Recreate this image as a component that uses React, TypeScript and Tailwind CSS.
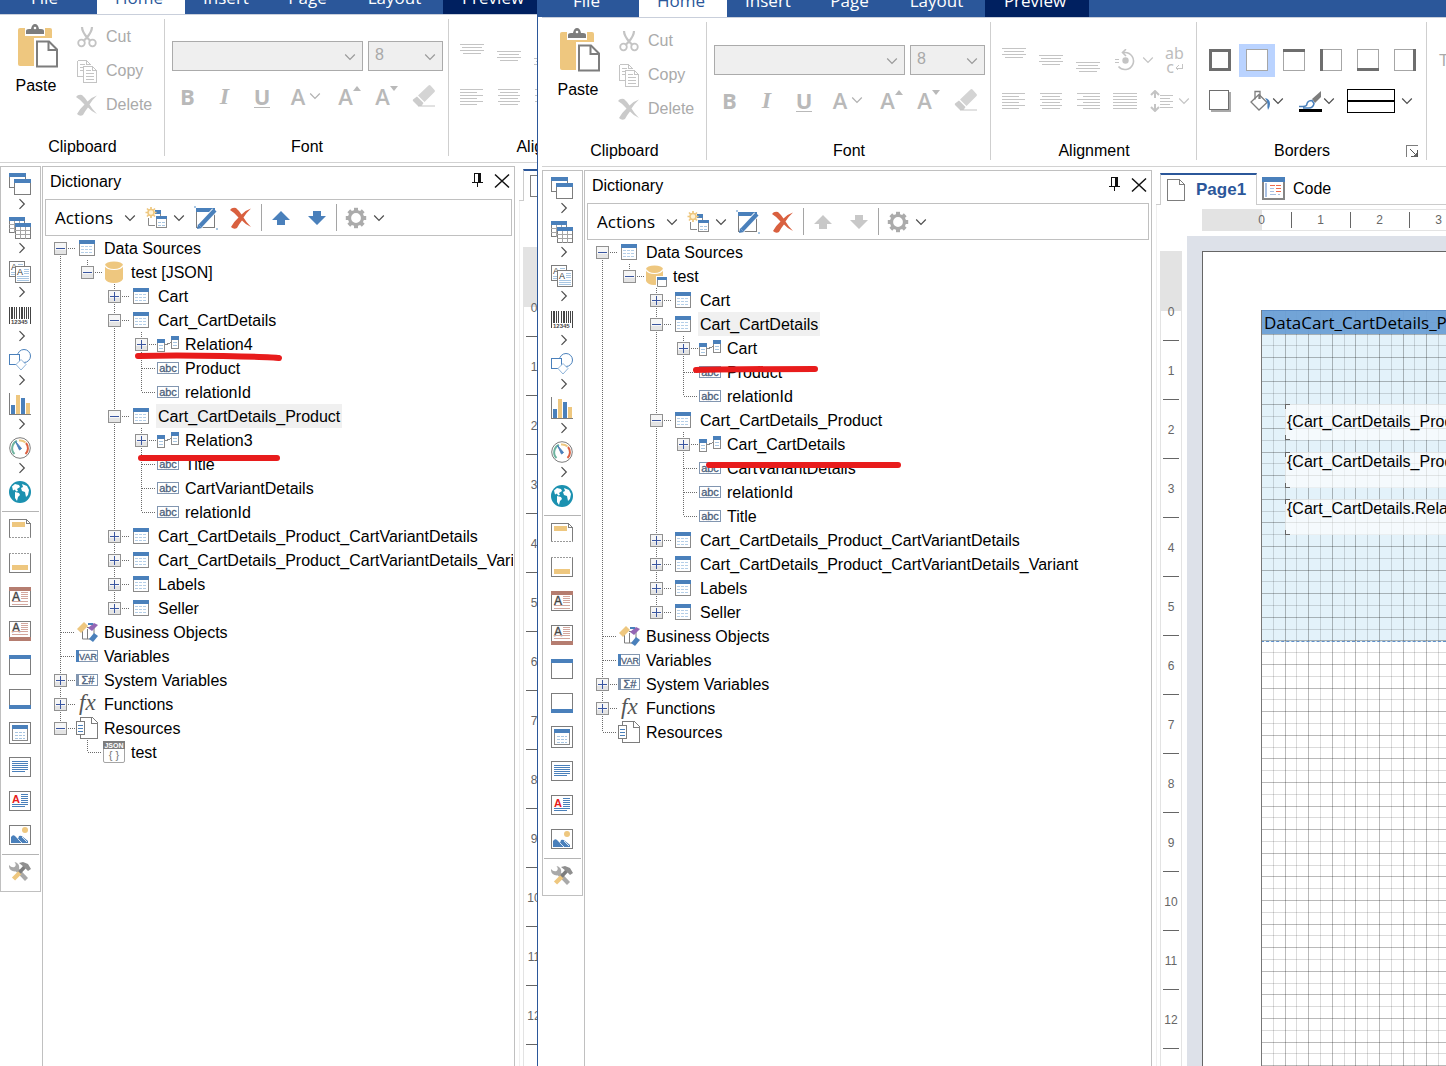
import React, { type ReactNode } from 'react';

const BLUE = '#4a80bb';
const GRAY = '#7d7d7d';
const GOLD = '#eec77f';
const MUTE = '#c4c4c4';

type SvgProps = { w?: number; h?: number; children: ReactNode; crisp?: boolean };

function Svg({ w = 22, h = 22, children, crisp = true }: SvgProps) {
  return (
    <svg
      width={w}
      height={h}
      viewBox={`0 0 ${w} ${h}`}
      fill="none"
      shapeRendering={crisp ? 'crispEdges' : 'auto'}
      aria-hidden="true"
      className="block shrink-0"
    >
      {children}
    </svg>
  );
}

function Lines({ rows, color }: { rows: [number, number, number][]; color: string }) {
  return (
    <>
      {rows.map(([x, y, w], i) => (
        <rect key={i} x={x} y={y} width={w} height={1} fill={color} />
      ))}
    </>
  );
}

function Chevron({ color = '#4d4d4d', side = false }: { color?: string; side?: boolean }) {
  return side ? (
    <Svg w={8} h={12} crisp={false}>
      <path d="M1.500 1.200 6.300 6l-4.800 4.800" stroke={color} strokeWidth={1.200} />
    </Svg>
  ) : (
    <Svg w={12} h={8} crisp={false}>
      <path d="M1.200 1.500 6 6.300l4.800-4.800" stroke={color} strokeWidth={1.200} />
    </Svg>
  );
}

/* ---------- ribbon icons ---------- */

const PasteIcon = () => (
  <Svg w={44} h={44} crisp={false}>
    <rect x={4} y={4} width={34} height={38} rx={2} fill={GOLD} />
    <path d="M11 0h20v12H11z" fill="#fff" />
    <path d="M12 10V7q0-2 3-2h2q1-5 4-5t4 5h2q3 0 3 2v3z" fill={GRAY} />
    <circle cx={21} cy={4} r={1.300} fill="#fff" />
    <path d="M20 14h18l6 6v24H20z" fill="#fff" />
    <path d="M23 17.500h12l8 8v17H23z" stroke={GRAY} strokeWidth={2} fill="#fff" />
    <path d="M34.500 17.500v8.500H43" stroke={GRAY} strokeWidth={2} />
  </Svg>
);

const CutIcon = () => (
  <Svg crisp={false}>
    <path d="M6 1c0 4 2 7 5.500 11l3 3M16 1c0 4-2 7-5.500 11l-3 3" stroke={MUTE} strokeWidth={2.200} />
    <circle cx={5.500} cy={17} r={3.300} stroke={MUTE} strokeWidth={1.800} />
    <circle cx={16.500} cy={17} r={3.300} stroke={MUTE} strokeWidth={1.800} />
  </Svg>
);

const CopyIcon = () => (
  <Svg h={24}>
    <path d="M1.500 1.500h9l4 4M1.500 1.500v16h5" stroke={MUTE} />
    <path d="M7.500 7.500h9l4 4v12h-13z" stroke={MUTE} fill="#fff" />
    <path d="M16.500 7.500v4h4M10.500 1.500v4h4" stroke={MUTE} />
    <Lines color={MUTE} rows={[[4, 5, 5], [4, 8, 3], [4, 11, 3], [10, 11, 5], [10, 14, 8], [10, 17, 8], [10, 20, 8]]} />
  </Svg>
);

const CrossIcon = ({ color }: { color: string }) => (
  <Svg crisp={false}>
    <path
      d="M0 3Q2 0 6 1q3 2.500 5.500 6.500Q16 3 21 1.500 16 6 13.500 10.500 16 15 21 20q-5-2-9-6.500-3 3.500-5 7.500-3 2-6-1 3-5.500 7.500-9.500Q5 6 0 3z"
      fill={color}
    />
  </Svg>
);

const FontSizeIcon = ({ up }: { up: boolean }) => (
  <span className="flex items-start">
    <span className="text-[22px] leading-[30px] font-semibold">A</span>
    <span className="pt-1">
      <Svg w={8} h={8} crisp={false}>
        <path d={up ? 'M0 6 4 1l4 5z' : 'M0 1h8L4 6z'} fill="#b9b9b9" />
      </Svg>
    </span>
  </span>
);

const EraserIcon = () => (
  <Svg w={24} h={24} crisp={false}>
    <path d="m6 11.500 10.500-10q1-1 2 0l4 4.500q1 1 0 2L12.500 18z" fill="#d4d4d4" />
    <path d="m5 12.500 6.500 6.500-2 3H6L1 17q-.5-1 0-1.500z" fill="#cccccc" />
    <path d="M6 22h17" stroke={MUTE} />
  </Svg>
);

const TextLines = ({ y, widths, align }: { y: number; widths: number[]; align: 'l' | 'c' | 'r' }) => (
  <Svg w={24} h={24}>
    <Lines
      color={MUTE}
      rows={widths.map((w, i) => [align === 'l' ? 0 : align === 'r' ? 24 - w : Math.floor((24 - w) / 2), y + i * 3, w])}
    />
  </Svg>
);

const RotateIcon = () => (
  <Svg w={22} h={22} crisp={false}>
    <path d="M9 3.500h2a8.500 8.500 0 1 1-6.500 14M12 .2 8.500 3.500l3.500 3.500" stroke={MUTE} strokeWidth={1.600} />
    <circle cx={11.500} cy={11.500} r={3.200} fill={MUTE} />
    <path d="M1 10.500h4M1 13.500h4" stroke={MUTE} />
  </Svg>
);

const SpacingIcon = () => (
  <Svg w={24} h={22} crisp={false}>
    <path d="M5 1v7M5 14v7M1 5l4-4 4 4M1 17l4 4 4-4" stroke={MUTE} strokeWidth={2} />
    <Lines color={MUTE} rows={[[10, 5, 13], [10, 8, 10], [10, 11, 13], [10, 14, 10], [10, 17, 13]]} />
  </Svg>
);

const BoxIcon = ({ side }: { side: 'all' | 'none' | 'top' | 'left' | 'bottom' | 'right' }) => (
  <Svg>
    {side === 'all' ? (
      <rect x={1.500} y={1.500} width={19} height={19} stroke="#6e6e6e" strokeWidth={3} fill="#fff" />
    ) : (
      <rect x={0.500} y={0.500} width={21} height={21} stroke="#a6a6a6" fill="#fff" />
    )}
    {side === 'top' && <rect width={22} height={3} fill="#6e6e6e" />}
    {side === 'left' && <rect width={3} height={22} fill="#6e6e6e" />}
    {side === 'bottom' && <rect y={19} width={22} height={3} fill="#6e6e6e" />}
    {side === 'right' && <rect x={19} width={3} height={22} fill="#6e6e6e" />}
  </Svg>
);

const ShadowIcon = () => (
  <Svg>
    <rect x={2} y={2} width={20} height={20} fill="#a9a9a9" />
    <rect x={0.500} y={0.500} width={19} height={19} stroke="#6e6e6e" fill="#fff" />
  </Svg>
);

const BucketIcon = () => (
  <Svg crisp={false}>
    <path d="m9 4.500 8 8-8 7.500-8-8z" stroke={GRAY} strokeWidth={1.300} fill="#fff" />
    <path d="M5 9.500V1.500h5V9M9 5v4" stroke={GRAY} strokeWidth={1.300} />
    <path d="M15 8q5 1 5 6 0 3-2 6-1-3-.5-6 0-3-2.500-6z" fill={BLUE} />
  </Svg>
);

const PenIcon = () => (
  <Svg w={25} h={24} crisp={false}>
    <path d="M23 2v6l-6 6-3-4z" fill={GRAY} />
    <path d="M1 17.500h4q4 0 4-3 1-3 5-3l2 3q-1 5-6 4.500H5" stroke={BLUE} strokeWidth={1.500} />
    <rect x={1} y={20} width={23} height={3} fill="#000" />
  </Svg>
);

const LineStyleIcon = () => (
  <Svg w={48} h={24}>
    <rect x={0.500} y={0.500} width={47} height={23} stroke="#000" fill="#fff" />
    <rect y={11} width={48} height={2} fill="#000" />
  </Svg>
);

/* ---------- component rail icons ---------- */

const BandsIcon = () => (
  <Svg>
    <rect x={0.500} y={0.500} width={16} height={14} stroke={GRAY} fill="#fff" />
    <rect width={17} height={4} fill={BLUE} />
    <rect x={5} y={6} width={17} height={16} fill="#fff" />
    <rect x={5.500} y={6.500} width={16} height={15} stroke={GRAY} fill="#fff" />
    <rect x={5} y={6} width={17} height={4} fill={BLUE} />
  </Svg>
);

const TablesIcon = () => (
  <Svg>
    <rect x={0.500} y={0.500} width={15} height={15} stroke={GRAY} fill="#fff" />
    <path d="M0 7.500h15M0 11.500h15M5.500 4v12M10.500 4v12" stroke="#a5a5a5" />
    <rect width={16} height={4} fill={BLUE} />
    <rect x={6.500} y={6.500} width={15} height={15} stroke={GRAY} fill="#fff" />
    <path d="M6 13.500h15M6 17.500h15M11.500 10v12M16.500 10v12" stroke="#a5a5a5" />
    <rect x={6} y={6} width={16} height={4} fill={BLUE} />
  </Svg>
);

const TextsIcon = () => (
  <Svg>
    <rect x={0.500} y={0.500} width={15} height={15} stroke={GRAY} fill="#fff" />
    <text x={2} y={9} fontSize={9} fontFamily="Liberation Sans" fill="#444">A</text>
    <Lines color="#a8c6e2" rows={[[9, 3, 5], [2, 11, 4], [2, 13, 4]]} />
    <rect x={6.500} y={5.500} width={15} height={16} stroke={GRAY} fill="#fff" />
    <text x={8} y={14} fontSize={9} fontFamily="Liberation Sans" fill="#333">A</text>
    <Lines color="#a8c6e2" rows={[[15, 8, 5], [15, 10, 5], [15, 12, 5], [8, 15, 12], [8, 17, 12], [8, 19, 12]]} />
  </Svg>
);

const BarcodeIcon = () => (
  <Svg>
    {[0, 2, 5, 7, 10, 12, 15, 17, 19, 21].map((x, i) => (
      <rect key={x} x={x} y={2} width={i === 1 || i === 5 ? 2 : 1} height={i === 0 || i === 9 ? 17 : 12} fill="#444" />
    ))}
    <text x={2} y={19} fontSize={6} fontFamily="Liberation Sans" fontWeight="bold" fill="#444">12345</text>
  </Svg>
);

const ShapesIcon = () => (
  <Svg crisp={false}>
    <circle cx={15} cy={7} r={6.500} stroke={BLUE} />
    <rect x={0.500} y={5.500} width={10} height={10} stroke={BLUE} fill="#fff" />
    <path d="m12 10.500 5 5-5 5.500-5-5.500z" stroke="#8fb4d9" fill="#fff" />
  </Svg>
);

const ChartIcon = () => (
  <Svg>
    <path d="M.5 0v21.500H22" stroke={GRAY} />
    <rect x={2} y={12} width={4} height={9} fill={BLUE} />
    <rect x={7} y={2} width={4} height={19} fill={GOLD} />
    <rect x={12} y={5} width={4} height={16} fill={BLUE} />
    <rect x={17} y={10} width={4} height={11} fill={GOLD} />
  </Svg>
);

const GaugeIcon = () => (
  <Svg crisp={false}>
    <circle cx={11} cy={11} r={10.300} stroke={GRAY} fill="#fff" />
    <path d="M5.500 17A8 8 0 0 1 8 4" stroke="#6fb4a0" strokeWidth={2} />
    <path d="M10 3.500a8 8 0 0 1 6.500 2" stroke={GOLD} strokeWidth={2} />
    <path d="M17 6a8 8 0 0 1-.5 11" stroke="#dc6243" strokeWidth={2} />
    <path d="m6.500 4.500 6 7-2 1.500z" fill={BLUE} stroke={BLUE} />
  </Svg>
);

const GlobeIcon = () => (
  <Svg crisp={false}>
    <circle cx={11} cy={11} r={11} fill="#1b91b0" />
    <path d="M3 5.500 6 3l4 1 1 2-3 2 1 2-2 .5-1-2-2 1zM6 11l4 1 1 2-2 2-1 4-2-3zM13 3l5 2 2 4-1 5-2 2-1-5-3-1-1-3 2-1z" fill="#fff" />
  </Svg>
);

const SheetHead = () => (
  <Svg h={20}>
    <path d="M.5 18V.5h17l4 4V18" stroke={GRAY} />
    <path d="M17.500 0v4.500H22" stroke={GRAY} />
    <rect x={3} y={3} width={13} height={5} fill={GOLD} />
    <path d="M0 18.500h22" stroke="#9a9a9a" strokeDasharray="2 1" />
  </Svg>
);

const SheetFoot = () => (
  <Svg h={20}>
    <path d="M.5 1v18.500h21V1" stroke={GRAY} />
    <rect x={3} y={12} width={16} height={5} fill={GOLD} />
    <path d="M0 .5h22" stroke="#9a9a9a" strokeDasharray="2 1" />
  </Svg>
);

const TextBand = ({ foot }: { foot: boolean }) => (
  <Svg h={20}>
    <rect x={0.500} y={0.500} width={21} height={19} stroke={GRAY} fill="#fff" />
    <rect y={foot ? 16 : 0} width={22} height={4} fill="#b57d70" />
    <text x={3} y={foot ? 11 : 14} fontSize={12} fontFamily="Liberation Sans" stroke="#444" strokeWidth={0.400} fill="#444">A</text>
    <Lines
      color="#d3a79e"
      rows={(foot ? [2, 4, 6, 8, 10, 13] : [5, 7, 9, 11, 14, 17]).map((y, i) => (i > 3 ? [3, y, 16] : [12, y, 7]))}
    />
  </Svg>
);

const PlainBand = ({ foot }: { foot: boolean }) => (
  <Svg h={20}>
    <rect x={0.500} y={0.500} width={21} height={19} stroke={GRAY} fill="#fff" />
    <rect y={foot ? 16 : 0} width={22} height={4} fill={BLUE} />
  </Svg>
);

const PanelIcon = () => (
  <Svg>
    <rect x={0.500} y={0.500} width={21} height={21} stroke={GRAY} fill="#fff" />
    <rect x={3.500} y={3.500} width={15} height={15} stroke="#8a8a8a" />
    <rect x={3} y={3} width={16} height={4} fill={BLUE} />
    <path d="M6 10.500h10M6 13.500h10M6 16.500h10" stroke="#a8c6e2" strokeDasharray="3 1" />
  </Svg>
);

const ParagraphIcon = () => (
  <Svg h={20}>
    <rect x={0.500} y={0.500} width={21} height={19} stroke={GRAY} fill="#fff" />
    <Lines color={BLUE} rows={[[3, 4, 16], [3, 6, 16], [3, 8, 16], [3, 10, 16], [3, 12, 16], [3, 14, 13]]} />
  </Svg>
);

const RichIcon = () => (
  <Svg h={20}>
    <rect x={0.500} y={0.500} width={21} height={19} stroke={GRAY} fill="#fff" />
    <text x={3} y={12} fontSize={11} fontWeight="bold" fontFamily="Liberation Sans" fill="#e8201c">A</text>
    <Lines color={BLUE} rows={[[12, 3, 7], [12, 5, 7], [12, 7, 7], [12, 9, 7], [12, 11, 7], [3, 13, 16], [3, 15, 13]]} />
  </Svg>
);

const PictureIcon = () => (
  <Svg h={20} crisp={false}>
    <rect x={0.500} y={0.500} width={21} height={19} stroke={GRAY} fill="#fff" />
    <circle cx={16} cy={5} r={3} fill={GOLD} />
    <path d="M2 18v-6q2-3 4-1l3 3 1-3q2-1 4 1l5 4v2z" fill={BLUE} />
    <path d="m9 14 4 4M13 12l5 5" stroke="#fff" strokeWidth={0.800} />
  </Svg>
);

const ToolsIcon = () => (
  <Svg crisp={false}>
    <path d="m7.500 8 10 10.500" stroke="#a9a9a9" strokeWidth={4.200} />
    <path d="M0 4q-.5 6 6 6.500Q12 9 9.500 3.500 8 1 5.500 1 8 4 5.500 6 2.500 7 0 4z" fill="#a9a9a9" />
    <path d="M4.500 18 11 11.500" stroke={GOLD} strokeWidth={4.500} />
    <path d="m10.500 11.500 5.500-6" stroke={GRAY} strokeWidth={3.500} />
    <path d="m10 2 4-1 5 2 3 5-3 2-4-4z" fill="#8f8f8f" />
  </Svg>
);

/* ---------- dictionary icons ---------- */

const NewItemIcon = () => (
  <Svg crisp={false}>
    <rect x={10} y={3} width={6} height={4} fill={BLUE} />
    <path d="M3.500 11v7.500H10M15.500 7v3" stroke="#8a8a8a" />
    <rect x={11.500} y={9.500} width={10} height={11} stroke="#8a8a8a" fill="#fff" />
    <rect x={11} y={9} width={11} height={3} fill={BLUE} />
    <path d="M13 15.500h7M13 18.500h7" stroke="#a8c6e2" strokeDasharray="3 1" />
    <path d="M6 0v11M.5 5.500h11M2 1.500l8 8M10 1.500l-8 8" stroke={GOLD} strokeWidth={1.700} />
    <circle cx={6} cy={5.500} r={3} fill="#fff3d6" stroke={GOLD} strokeWidth={1.500} />
  </Svg>
);

const EditIcon = () => (
  <Svg w={24} h={24} crisp={false}>
    <rect x={2.500} y={2.500} width={18} height={19} stroke={GRAY} fill="#fff" />
    <rect x={2} y={2} width={19} height={4} fill={BLUE} />
    <path d="m5.500 20.500 15-16" stroke="#fff" strokeWidth={6} />
    <path d="m6 20 15-16" stroke={BLUE} strokeWidth={4.200} />
    <path d="m3 23 1-5 4 4z" fill={BLUE} />
    <path d="M0 0h2v2H0zM22 22h2v2h-2z" fill="#a8c6e2" />
  </Svg>
);

const ArrowIcon = ({ down, muted }: { down: boolean; muted: boolean }) => (
  <Svg w={18} h={14} crisp={false}>
    <path d={down ? 'M5 0h8v5h5l-9 9-9-9h5z' : 'M5 14h8V9h5L9 0 0 9h5z'} fill={muted ? '#c8c8c8' : BLUE} />
  </Svg>
);

const GearIcon = () => (
  <Svg crisp={false}>
    <circle cx={11} cy={11} r={6.500} stroke="#ababab" strokeWidth={3.200} />
    {[0, 45, 90, 135, 180, 225, 270, 315].map((a) => (
      <rect key={a} x={9} y={0.800} width={4} height={4} fill="#ababab" transform={`rotate(${a} 11 11)`} />
    ))}
  </Svg>
);

const PinIcon = () => (
  <Svg w={11} h={14}>
    <path d="M2.500 9V.5h6V9" stroke="#111" />
    <rect x={6} y={0} width={3} height={9} fill="#111" />
    <path d="M0 9.500h11M5.500 9v5" stroke="#111" />
  </Svg>
);

const CloseIcon = () => (
  <Svg w={16} h={16} crisp={false}>
    <path d="m1 1.500 14 13M15 1.500l-14 13" stroke="#111" strokeWidth={1.500} />
  </Svg>
);

const TableIcon = () => (
  <Svg>
    <rect x={3.500} y={3.500} width={15} height={15} stroke="#8a8a8a" fill="#fff" />
    <rect x={3} y={3} width={16} height={4} fill={BLUE} />
    <path d="M5 9.500h12M5 12.500h12M5 15.500h12" stroke="#b5cfe8" strokeDasharray="3 1" />
  </Svg>
);

const DatabaseIcon = ({ linked }: { linked: boolean }) => (
  <Svg crisp={false}>
    <path d={linked ? 'M1 4v12q2 4 8 4t9-4V4z' : 'M2 4v14q2 4 9 4t9-4V4z'} fill={GOLD} />
    <ellipse cx={linked ? 9.500 : 11} cy={4} rx={linked ? 8.500 : 9} ry={3.500} fill={GOLD} />
    <path d={linked ? 'M1 4.500q2 4 8.500 4t8.500-4' : 'M2 4.500q2 4 9 4t9-4'} stroke="#fff" strokeWidth={1.200} />
    {linked && (
      <>
        <path d="M11 11h11v11H11z" fill="#fff" />
        <path d="M12.500 12.500h9v9h-9z" stroke="#8a8a8a" fill="#fff" />
        <path d="M12 12h10v3H12z" fill={BLUE} />
      </>
    )}
  </Svg>
);

const RelationIcon = () => (
  <Svg>
    <path d="M7 12.500 15 9" stroke="#8a8a8a" />
    <rect x={0.500} y={6.500} width={7} height={12} stroke="#8a8a8a" fill="#fff" />
    <rect y={6} width={8} height={4} fill={BLUE} />
    <rect x={14.500} y={3.500} width={7} height={12} stroke="#8a8a8a" fill="#fff" />
    <rect x={14} y={3} width={8} height={4} fill={BLUE} />
    <Lines color="#a8c6e2" rows={[[2, 12, 4], [2, 15, 4], [16, 9, 4], [16, 12, 4]]} />
  </Svg>
);

const TagIcon = ({ label, bar, size }: { label: string; bar: string | null; size: number }) => (
  <Svg>
    <rect x={0.500} y={5.500} width={21} height={11} stroke="#8296b0" fill="#fff" />
    {bar && <rect y={5} width={3} height={12} fill={bar} />}
    <text
      x={bar ? 12 : 11}
      y={15}
      fontSize={size}
      textAnchor="middle"
      fontFamily="Liberation Sans"
      stroke="#4d5f7c"
      strokeWidth={0.300}
      fill="#4d5f7c"
    >
      {label}
    </text>
  </Svg>
);

const BusinessIcon = () => (
  <Svg crisp={false}>
    <path d="M6.500 8v10h8M11.500 8v10M11 6.500h7v8" stroke={GRAY} />
    <path d="m1 8 7-7 4 4-7 7z" fill={GOLD} />
    <path d="m12 7 6-5 4 2-6 6z" fill="#9466b4" />
    <path d="m13 18 5-6 4 3-5 6z" fill={BLUE} />
    <path d="M12 3h5" stroke={BLUE} strokeWidth={2} />
  </Svg>
);

const FunctionIcon = () => (
  <Svg crisp={false}>
    <text x={3} y={17} fontSize={23} fontStyle="italic" fontFamily="Liberation Serif" fill="#555">fx</text>
  </Svg>
);

const ResourceIcon = () => (
  <Svg>
    <path d="M4.500.5h12l5 5v16h-17z" stroke={GRAY} fill="#fff" />
    <path d="M15.500.5v5.500H21" stroke={GRAY} />
    <rect x={0.500} y={4.500} width={8} height={13} stroke={GRAY} fill="#fff" />
    <Lines color={BLUE} rows={[[2, 8, 5], [2, 11, 5], [2, 14, 5]]} />
  </Svg>
);

const JsonIcon = () => (
  <Svg crisp={false}>
    <rect x={0.500} y={0.500} width={21} height={21} rx={1.500} stroke="#a5a5a5" fill="#fff" />
    <rect width={22} height={8} fill={GRAY} />
    <text x={11} y={7} fontSize={7} fontWeight="bold" textAnchor="middle" fontFamily="Liberation Sans" fill="#fff">JSON</text>
    <text x={11} y={18} fontSize={11} textAnchor="middle" fontFamily="Liberation Sans" fill="#777">{'{ }'}</text>
  </Svg>
);

/* ---------- ribbon ---------- */

function IconButton({ label, className, children }: { label: string; className: string; children: ReactNode }) {
  return (
    <button type="button" aria-label={label} className={`flex h-[30px] shrink-0 items-center justify-center ${className}`}>
      {children}
    </button>
  );
}

function Group({ title, className, children, launcher }: { title: string; className: string; children: ReactNode; launcher?: boolean }) {
  return (
    <section className={`flex shrink-0 flex-col justify-end border-r border-[#cfcfcf] ${className}`}>
      <div className="h-[117px]">{children}</div>
      <div className="flex h-[19px] items-center justify-center">
        <h2 className="flex-1 pl-px text-center">{title}</h2>
        {launcher && (
          <button type="button" aria-label="Border settings" className="w-5">
            <Svg w={12} h={12}>
              <path d="M.5 12V.5H12" stroke={GRAY} />
              <path d="m4 4 7 7M11.500 5v6.500H5" stroke="#555" />
              <path d="M11 7v5H6z" fill="#666" />
            </Svg>
          </button>
        )}
      </div>
    </section>
  );
}

function Combo({ label, value, className }: { label: string; value: string; className: string }) {
  return (
    <div className={`relative shrink-0 ${className}`}>
      <select
        aria-label={label}
        disabled
        className="h-[30px] w-full appearance-none border border-[#ababab] bg-[#efefef] pb-0.5 pl-1.5 text-base leading-5 text-[#a8a8a8] opacity-100"
      >
        <option>{value}</option>
      </select>
      <span className="pointer-events-none absolute top-3 right-[7px]">
        <Chevron color="#9a9a9a" />
      </span>
    </div>
  );
}

function Ribbon({ className, compact }: { className: string; compact: boolean }) {
  const clip: [string, ReactNode][] = [
    ['Cut', <CutIcon />],
    ['Copy', <CopyIcon />],
    ['Delete', <CrossIcon color="#cacaca" />],
  ];
  return (
    <div className={`flex shrink-0 overflow-hidden border-b border-[#d2d2d2] bg-white pt-1 pb-1.5 ${className}`}>
      <Group title="Clipboard" className="w-[165px]">
        <div className="flex">
          <button type="button" className="flex w-[72px] flex-col items-center pt-1">
            <PasteIcon />
            <span className="pt-2 leading-5">Paste</span>
          </button>
          <div className="flex flex-col">
            {clip.map(([name, icon]) => (
              <button key={name} type="button" disabled className="flex h-[34px] items-center gap-2 pl-1 text-[#aaaaaa]">
                <span className="flex w-[22px] justify-center">{icon}</span>
                {name}
              </button>
            ))}
          </div>
        </div>
      </Group>

      <Group title="Font" className="w-[284px]">
        <div className="flex gap-[5px] pt-[21px] pl-[7px]">
          <Combo label="Font name" value="" className="w-[191px]" />
          <Combo label="Font size" value="8" className="w-[75px]" />
        </div>
        <div className="flex pt-2.5 pl-1 font-['Open_Sans','Noto_Sans',sans-serif] text-[#b9b9b9]">
          <IconButton label="Bold" className="w-[37px] text-[22px] font-bold">B</IconButton>
          <IconButton label="Italic" className="w-[37px] font-['Liberation_Serif',serif] text-2xl font-bold italic">I</IconButton>
          <IconButton label="Underline" className="w-[38px]">
            <span className="border-b border-[#b9b9b9] text-[22px] leading-[22px] font-bold">U</span>
          </IconButton>
          <IconButton label="Text colour" className="w-[50px]">
            <span className="pr-1 text-[22px] font-semibold">A</span>
            <Chevron color="#b0b0b0" />
          </IconButton>
          <IconButton label="Grow font" className="w-[37px]"><FontSizeIcon up /></IconButton>
          <IconButton label="Shrink font" className="w-[37px]"><FontSizeIcon up={false} /></IconButton>
          <IconButton label="Clear" className="w-[38px]"><EraserIcon /></IconButton>
        </div>
      </Group>

      <Group title="Alignment" className="w-[206px]">
        <div className="flex pt-[21px] pl-1">
          <IconButton label="Top" className="w-[37px]"><TextLines y={0} widths={[24, 20, 24, 18]} align="c" /></IconButton>
          <IconButton label="Middle" className="w-[37px]"><TextLines y={7} widths={[24, 20, 24, 18]} align="c" /></IconButton>
          <IconButton label="Bottom" className="w-[37px]"><TextLines y={14} widths={[24, 20, 24, 18]} align="c" /></IconButton>
          {!compact && (
            <>
              <IconButton label="Rotate" className="w-[49px] gap-1.5 pl-1.5">
                <RotateIcon />
                <Chevron color={MUTE} />
              </IconButton>
              <IconButton label="Wrap text" className="w-[37px] flex-col pl-0.5 font-['Noto_Sans',sans-serif] text-base leading-[14px] text-[#bdbdbd]">
                <span>ab</span>
                <span className="flex items-center">
                  c
                  <Svg w={9} h={9}>
                    <path d="M8 1v4H2M4.500 2.500 2 5l2.500 2.500" stroke={MUTE} />
                  </Svg>
                </span>
              </IconButton>
            </>
          )}
        </div>
        <div className="flex pt-[11px] pl-1">
          <IconButton label="Align left" className="w-[37px]"><TextLines y={4} widths={[23, 17, 23, 17, 23, 17]} align="l" /></IconButton>
          <IconButton label="Align centre" className="w-[37px]"><TextLines y={4} widths={[22, 18, 22, 18, 22, 18]} align="c" /></IconButton>
          <IconButton label="Align right" className="w-[37px]"><TextLines y={4} widths={[23, 17, 23, 17, 23, 17]} align="r" /></IconButton>
          <IconButton label="Justify" className="w-[37px]"><TextLines y={4} widths={[24, 24, 24, 24, 24, 24]} align="c" /></IconButton>
          <IconButton label="Line spacing" className="w-[50px] gap-1 pl-1">
            <SpacingIcon />
            <Chevron color={MUTE} />
          </IconButton>
        </div>
      </Group>

      {!compact && (
        <>
          <Group title="Borders" className="w-[230px]" launcher>
            <div className="flex pt-[21px] pl-1">
              {(['all', 'none', 'top', 'left', 'bottom', 'right'] as const).map((side) => (
                <IconButton key={side} label={`Border ${side}`} className="w-[37px]">
                  <span className={`flex h-[33px] w-9 shrink-0 items-center justify-center ${side === 'none' ? 'bg-[#bad3ff]' : ''}`}>
                    <BoxIcon side={side} />
                  </span>
                </IconButton>
              ))}
            </div>
            <div className="flex pt-[11px] pl-1">
              <IconButton label="Shadow" className="w-[37px]"><ShadowIcon /></IconButton>
              <IconButton label="Fill" className="ml-1 w-[49px]"><BucketIcon /><Chevron /></IconButton>
              <IconButton label="Border colour" className="w-[51px]"><PenIcon /><Chevron /></IconButton>
              <IconButton label="Line style" className="w-[76px] gap-1.5"><LineStyleIcon /><Chevron /></IconButton>
            </div>
          </Group>
          <div className="shrink-0 overflow-hidden pt-[29px] pl-3 text-[#aaaaaa]">T</div>
        </>
      )}
    </div>
  );
}

/* ---------- rail ---------- */

function Rail() {
  const groups: [string, ReactNode][] = [
    ['Bands', <BandsIcon />],
    ['Cross bands', <TablesIcon />],
    ['Components', <TextsIcon />],
    ['Barcodes', <BarcodeIcon />],
    ['Shapes', <ShapesIcon />],
    ['Charts', <ChartIcon />],
    ['Gauges', <GaugeIcon />],
  ];
  const items: [string, ReactNode][] = [
    ['Report title', <SheetHead />],
    ['Report summary', <SheetFoot />],
    ['Header', <TextBand foot={false} />],
    ['Footer', <TextBand foot />],
    ['Group header', <PlainBand foot={false} />],
    ['Group footer', <PlainBand foot />],
    ['Data band', <PanelIcon />],
    ['Text', <ParagraphIcon />],
    ['Rich text', <RichIcon />],
    ['Image', <PictureIcon />],
  ];
  return (
    <nav aria-label="Toolbox" className="mt-[3px] flex w-[41px] shrink-0 flex-col self-start border border-[#c0c0c0] bg-white px-px pt-1.5 pb-0.5">
      {groups.map(([name, icon]) => (
        <button key={name} type="button" aria-label={name} className="flex h-11 flex-col items-center pr-px">
          {icon}
          <span className="pt-[3px] pl-[3px]">
            <Chevron side />
          </span>
        </button>
      ))}
      <button type="button" aria-label="Maps" className="flex justify-center pr-px">
        <GlobeIcon />
      </button>
      <hr className="mt-2 border-[#b4b4b4]" />
      {items.map(([name, icon]) => (
        <button key={name} type="button" aria-label={name} className="flex h-[34px] items-center justify-center pr-px">
          {icon}
        </button>
      ))}
      <hr className="mt-0.5 border-[#b4b4b4]" />
      <button type="button" aria-label="Toolbox settings" className="flex h-[34px] items-center justify-center pr-px">
        <ToolsIcon />
      </button>
    </nav>
  );
}

/* ---------- dictionary tree ---------- */

type Node = { text: string; icon: ReactNode; open?: boolean; closed?: boolean; selected?: boolean; kids?: Node[] };

const table = (text: string, rest: Partial<Node> = {}): Node => ({ text, icon: <TableIcon />, closed: !rest.kids, open: !!rest.kids, ...rest });
const field = (text: string): Node => ({ text, icon: <TagIcon label="abc" bar={null} size={11} /> });
const relation = (text: string): Node => ({ text, icon: <RelationIcon />, closed: true });

const commonNodes: Node[] = [
  { text: 'Business Objects', icon: <BusinessIcon /> },
  { text: 'Variables', icon: <TagIcon label="VAR" bar={BLUE} size={9} /> },
  { text: 'System Variables', icon: <TagIcon label="Σ#" bar="#8296b0" size={11} />, closed: true },
  { text: 'Functions', icon: <FunctionIcon />, closed: true },
];

const tailTables: Node[] = [
  table('Cart_CartDetails_Product_CartVariantDetails'),
  table('Cart_CartDetails_Product_CartVariantDetails_Variant'),
  table('Labels'),
  table('Seller'),
];

const leftTree: Node[] = [
  table('Data Sources', {
    kids: [
      {
        text: 'test [JSON]',
        icon: <DatabaseIcon linked={false} />,
        open: true,
        kids: [
          table('Cart'),
          table('Cart_CartDetails', { kids: [relation('Relation4'), field('Product'), field('relationId')] }),
          table('Cart_CartDetails_Product', {
            selected: true,
            kids: [relation('Relation3'), field('Title'), field('CartVariantDetails'), field('relationId')],
          }),
          ...tailTables,
        ],
      },
    ],
  }),
  ...commonNodes,
  { text: 'Resources', icon: <ResourceIcon />, open: true, kids: [{ text: 'test', icon: <JsonIcon /> }] },
];

const rightTree: Node[] = [
  table('Data Sources', {
    kids: [
      {
        text: 'test',
        icon: <DatabaseIcon linked />,
        open: true,
        kids: [
          table('Cart'),
          table('Cart_CartDetails', { selected: true, kids: [relation('Cart'), field('Product'), field('relationId')] }),
          table('Cart_CartDetails_Product', {
            kids: [relation('Cart_CartDetails'), field('CartVariantDetails'), field('relationId'), field('Title')],
          }),
          ...tailTables,
        ],
      },
    ],
  }),
  ...commonNodes,
  { text: 'Resources', icon: <ResourceIcon /> },
];

function Joint({ up, down, node }: { up: boolean; down: boolean; node: Node }) {
  const dots = { stroke: '#6b6b6b', strokeDasharray: '1 1' };
  const drawing = (
    <Svg w={29} h={24}>
      {up && <path d="M13.500 0v12" {...dots} />}
      {down && <path d="M13.500 12v12" {...dots} />}
      <path d={node.open || node.closed ? 'M21 12.500h7' : 'M14 12.500h14'} {...dots} />
      {(node.open || node.closed) && (
        <>
          <rect x={7.500} y={6.500} width={12} height={12} rx={1} stroke="#919191" fill="#f6f6f6" />
          <rect x={8} y={14} width={11} height={4} fill="#e4e4e4" />
          <path d="M9 12.500h9" stroke="#3a56a0" />
          {node.closed && <path d="M13.500 8v9" stroke="#3a56a0" />}
        </>
      )}
    </Svg>
  );
  return node.open || node.closed ? (
    <button type="button" aria-label={`${node.open ? 'Collapse' : 'Expand'} ${node.text}`} className="shrink-0">
      {drawing}
    </button>
  ) : (
    drawing
  );
}

function Branch({ nodes, rails }: { nodes: Node[]; rails: boolean[] }) {
  return (
    <ul>
      {nodes.map((node, i) => {
        const last = i === nodes.length - 1;
        return (
          <li key={node.text}>
            <div className="flex h-6 items-center">
              {rails.map((on, k) => (
                <Svg key={k} w={27} h={24}>
                  {on && <path d="M13.500 0v24" stroke="#6b6b6b" strokeDasharray="1 1" />}
                </Svg>
              ))}
              <Joint up={rails.length > 0 || i > 0} down={!last} node={node} />
              {node.icon}
              <span className={`ml-1 px-0.5 pt-px leading-[23px] whitespace-nowrap ${node.selected ? 'bg-[#f0f0f0]' : ''}`}>{node.text}</span>
            </div>
            {node.kids && <Branch nodes={node.kids} rails={[...rails, !last]} />}
          </li>
        );
      })}
    </ul>
  );
}

function Dictionary({ className, tree, muted, marks }: { className: string; tree: Node[]; muted: boolean; marks: string[] }) {
  return (
    <aside className={`mt-[3px] ml-px flex shrink-0 flex-col border border-b-0 border-[#c0c0c0] bg-white ${className}`}>
      <header className="flex h-8 shrink-0 items-center pr-1 pl-[7px]">
        <h2 className="flex-1 pb-0.5">Dictionary</h2>
        <button type="button" aria-label="Pin" className="pb-1.5"><PinIcon /></button>
        <button type="button" aria-label="Close" className="ml-[11px] pb-1"><CloseIcon /></button>
      </header>
      <div className="mx-0.5 flex h-[37px] shrink-0 items-center border border-[#c0c0c0] pl-[9px]">
        <button type="button" className="flex w-[81px] items-center justify-between font-['Open_Sans','Noto_Sans',sans-serif] text-[17px]">
          Actions
          <Chevron />
        </button>
        <button type="button" aria-label="New item" className="ml-[9px] flex items-center gap-1.5"><NewItemIcon /><Chevron /></button>
        <button type="button" aria-label="Edit" className="ml-[9px]"><EditIcon /></button>
        <button type="button" aria-label="Delete" className="ml-3"><CrossIcon color="#d9603f" /></button>
        <span className="ml-[9px] h-[27px] border-l border-[#a5a5a5]" />
        <button type="button" aria-label="Move up" className="ml-2.5"><ArrowIcon down={false} muted={muted} /></button>
        <button type="button" aria-label="Move down" className="ml-[18px]"><ArrowIcon down muted={muted} /></button>
        <span className="ml-2.5 h-[27px] border-l border-[#a5a5a5]" />
        <button type="button" aria-label="Settings" className="ml-2 flex items-center gap-1.5"><GearIcon /><Chevron /></button>
      </div>
      <div className="relative min-h-0 flex-1 overflow-hidden pr-px pl-1">
        <div className="overflow-hidden">
          <Branch nodes={tree} rails={[]} />
        </div>
        <svg width={340} height={240} fill="none" aria-hidden="true" className="pointer-events-none absolute top-0 left-0">
          {marks.map((d) => (
            <path key={d} d={d} stroke="#e81c1c" strokeWidth={6} strokeLinecap="round" strokeLinejoin="round" />
          ))}
        </svg>
      </div>
    </aside>
  );
}

/* ---------- report page ---------- */

const gridSteps = [0, 12, 24, 35, 47, 59, 71, 83, 94, 106];

function Grid({ id }: { id: string }) {
  return (
    <svg aria-hidden="true" width="100%" height="100%" shapeRendering="crispEdges" className="absolute inset-0">
      <defs>
        <pattern id={id} width={118} height={118} patternUnits="userSpaceOnUse">
          {gridSteps.map((p, i) => (
            <g key={p} fill="#000" fillOpacity={i % 2 ? 0.14 : 0.27}>
              <rect x={p} y={0} width={1} height={118} />
              <rect x={0} y={p} width={118} height={1} />
            </g>
          ))}
        </pattern>
      </defs>
      <rect width="100%" height="100%" fill={`url(#${id})`} />
    </svg>
  );
}

function TextBox({ text, className }: { text: string; className: string }) {
  return (
    <div className={`relative ml-[23px] h-9 bg-white/65 pl-0.5 whitespace-nowrap ${className}`}>
      {text}
      <span className="absolute top-0 left-0 size-[5px] border-t border-l border-[#666666]" />
      <span className="absolute bottom-0 left-0 size-[5px] border-b border-l border-[#666666]" />
    </div>
  );
}

function Designer({ id, compact }: { id: string; compact: boolean }) {
  const vertical = Array.from({ length: 13 }, (_, n) => n);
  const horizontal = compact ? [] : [0, 1, 2, 3];
  return (
    <main className="flex min-w-0 flex-1 flex-col overflow-hidden pt-1.5 pl-1">
      <div className="flex h-8 shrink-0 border-b border-[#cccccc] pl-1">
        <button
          type="button"
          aria-label="Page1"
          className="-mb-px flex h-8 w-[97px] shrink-0 items-center gap-[11px] border-x border-t-2 border-x-[#cccccc] border-t-[#2b579a] bg-white pl-1.5 text-[17px] font-bold text-[#2b579a]"
        >
          <Svg w={18} h={22}>
            <path d="M.5.5h12l5 5v16H.5z" stroke={GRAY} fill="#fff" />
            <path d="M12.500.5v5H18" stroke={GRAY} />
          </Svg>
          {!compact && 'Page1'}
        </button>
        {!compact && (
          <button type="button" className="flex shrink-0 items-center gap-2 pl-[5px]">
            <Svg w={23} h={23}>
              <rect x={1} y={1} width={21} height={21} stroke="#858585" strokeWidth={2} fill="#fff" />
              <rect width={23} height={5} fill={BLUE} />
              <rect x={3} y={6} width={2} height={14} fill="#a9c0e2" />
              <Lines color="#ec6a4c" rows={[[8, 8, 5], [14, 8, 5], [14, 11, 5], [14, 14, 5]]} />
              <Lines color="#a9c0e2" rows={[[8, 11, 4], [8, 14, 4], [8, 17, 6], [16, 17, 2]]} />
            </Svg>
            <span className="pt-px">Code</span>
          </button>
        )}
      </div>
      <div className="flex min-h-0 flex-1 flex-col overflow-hidden border-l border-[#efefef] text-xs text-[#666666]">
        <div className="mt-1 mb-[5px] ml-[45px] flex h-[22px] shrink-0 items-center border border-r-0 border-[#e3e3e3] bg-[linear-gradient(to_right,#e3e3e3_59px,transparent_59px)] pl-[30px]">
          {horizontal.map((n) => (
            <span key={n} className="h-4 w-[59px] shrink-0 border-r border-[#666666] pt-px pr-px text-center leading-[15px]">{n}</span>
          ))}
        </div>
        <div className="flex min-h-0 flex-1">
          <div className="mt-[15px] ml-[3px] flex w-[22px] shrink-0 flex-col items-center overflow-hidden border border-b-0 border-[#e3e3e3] bg-[linear-gradient(to_bottom,#e3e3e3_59px,transparent_59px)] pt-[30px]">
            {vertical.map((n) => (
              <span key={n} className="h-[59px] w-4 shrink-0 border-b border-[#666666] text-center leading-[60px]">{n}</span>
            ))}
          </div>
          <div className="ml-[5px] flex min-w-0 flex-1 bg-[#dde1e9] pt-[15px] pl-[15px]">
            {!compact && (
              <div className="flex min-w-0 flex-1 border-t border-l border-[#666666] bg-white pt-[58px] pl-[58px]">
                <div className="relative min-w-0 flex-1 overflow-hidden border-l border-[#777777] text-base text-black">
                  <div className="h-[332px] bg-[#e3f2fa]" />
                  <div className="absolute inset-y-0 right-0 -left-px">
                    <Grid id={id} />
                  </div>
                  <div className="absolute inset-x-0 top-0 -ml-px h-[332px] border-b border-l border-dashed border-[#5f8fc9]">
                    <div className="h-6 border-t border-[#5a8cc6] bg-[#6c9fd5]/95 pl-0.5 font-['Open_Sans','Noto_Sans',sans-serif] text-[17px] leading-6 whitespace-nowrap">
                      DataCart_CartDetails_Pr
                    </div>
                    <TextBox text="{Cart_CartDetails_Prod" className="mt-[70px] leading-[35px]" />
                    <TextBox text="{Cart_CartDetails_Prod" className="mt-3 leading-[20px]" />
                    <TextBox text="{Cart_CartDetails.Relat" className="mt-[11px] leading-[20px]" />
                  </div>
                </div>
              </div>
            )}
          </div>
        </div>
      </div>
    </main>
  );
}

/* ---------- windows ---------- */

type WindowProps = {
  id: string;
  tabsClass: string;
  ribbonClass: string;
  panelClass: string;
  tree: Node[];
  compact: boolean;
  marks: string[];
};

function DesignerWindow({ id, tabsClass, ribbonClass, panelClass, tree, compact, marks }: WindowProps) {
  const tab = 'flex h-full shrink-0 items-end justify-center pb-1.5';
  return (
    <div className="flex h-full min-w-0 flex-1 flex-col overflow-hidden bg-white">
      <nav
        aria-label="Ribbon tabs"
        className={`flex shrink-0 items-end overflow-hidden border-b border-[#c9cfdb] bg-[#2b579a] font-['Open_Sans','Noto_Sans',sans-serif] text-[17px] leading-5 text-white ${tabsClass}`}
      >
        <button type="button" className={`${tab} mr-2 w-[89px]`}>File</button>
        <button type="button" className={`${tab} w-[88px] bg-white pr-1 text-[#2b579a]`}>Home</button>
        <button type="button" className={`${tab} w-[82px]`}>Insert</button>
        <button type="button" className={`${tab} w-[81px]`}>Page</button>
        <button type="button" className={`${tab} w-[95px] pr-0.5`}>Layout</button>
        <button type="button" className={`${tab} w-[104px] bg-[#002060] pr-1`}>Preview</button>
      </nav>
      <Ribbon className={ribbonClass} compact={compact} />
      <div className="flex min-h-0 flex-1">
        <Rail />
        <Dictionary className={panelClass} tree={tree} muted={!compact} marks={marks} />
        <Designer id={id} compact={compact} />
      </div>
    </div>
  );
}

export default function App() {
  return (
    <div className="grid h-screen grid-cols-[minmax(0,537fr)_minmax(0,909fr)] grid-rows-[minmax(0,1fr)] overflow-hidden bg-white font-['Liberation_Sans',Arial,sans-serif] text-base leading-5 text-black">
      <DesignerWindow
        id="grid-left"
        tabsClass="h-[15px]"
        ribbonClass="h-[148px]"
        panelClass="w-[473px]"
        tree={leftTree}
        compact
        marks={['M95 120 Q130 119 180 120 T236 122', 'M98 222 H234']}
      />
      <div className="flex min-w-0 border-l border-[#2b579a] bg-[linear-gradient(to_bottom,#2b579a_17px,#ffffff_17px)] pl-1">
        <DesignerWindow
          id="grid-right"
          tabsClass="h-[18px]"
          ribbonClass="h-[149px]"
          panelClass="w-[568px]"
          tree={rightTree}
          compact={false}
          marks={['M111 130 Q150 129 230 129', 'M124 225 H313']}
        />
      </div>
    </div>
  );
}
